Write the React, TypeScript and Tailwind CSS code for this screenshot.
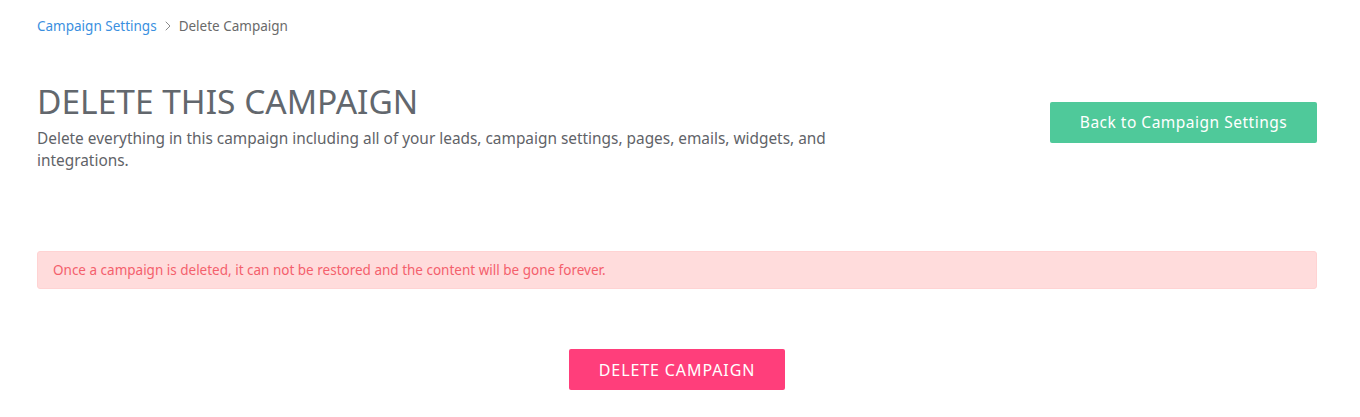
import { ChevronRight } from "lucide-react";

const font = { fontFamily: "'Noto Sans', Lato, sans-serif" };

export default function App() {
  return (
    <div className="min-h-[417px] bg-white text-[#5f6368]" style={font}>
      <div className="w-[1280px] ml-[37px] pt-[16px]">
        {/* breadcrumb */}
        <nav className="flex items-center h-[20px] text-[13.5px]">
          <a href="#" className="text-[#3a8fe0]">Campaign Settings</a>
          <ChevronRight className="mx-[3px] h-[16px] w-[16px] text-[#8a8a8a]" strokeWidth={1.5} />
          <span className="text-[#6a6a6a]">Delete Campaign</span>
        </nav>

        <div className="mt-[43px] flex items-start justify-between">
          <div className="w-[800px]">
            <h1 className="text-[33.5px] leading-[44px] font-normal text-[#62676d]">
              DELETE THIS CAMPAIGN
            </h1>
            <p className="mt-[5px] text-[15.4px] leading-[22px] text-[#5f6368]">
              Delete everything in this campaign including all of your leads, campaign settings, pages, emails, widgets, and integrations.
            </p>
          </div>
          <button className="mt-[23px] h-[41px] w-[267px] rounded-[2px] bg-[#4fc99a] text-[15.5px] text-white tracking-[0.5px]">
            Back to Campaign Settings
          </button>
        </div>

        <div className="mt-[79px] h-[38px] flex items-center rounded-[3px] border border-[#ffd3d3] bg-[#ffdcdc] px-[15px] text-[13.5px] text-[#f4606c]">
          Once a campaign is deleted, it can not be restored and the content will be gone forever.
        </div>

        <div className="mt-[60px] flex justify-center">
          <button className="h-[41px] w-[216px] rounded-[2px] bg-[#ff3e7b] text-[16px] text-white tracking-[0.9px]">
            DELETE CAMPAIGN
          </button>
        </div>
      </div>
    </div>
  );
}
